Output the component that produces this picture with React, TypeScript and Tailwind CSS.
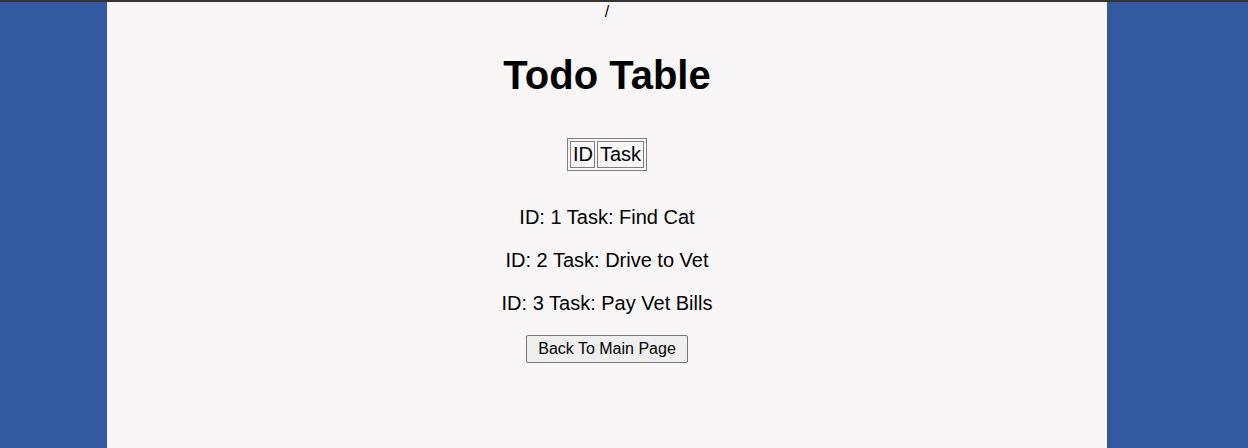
export default function App() {
  const todos = [
    { id: 1, task: "Find Cat" },
    { id: 2, task: "Drive to Vet" },
    { id: 3, task: "Pay Vet Bills" },
  ];
  return (
    <div className="flex flex-col h-[448px] w-[1248px] overflow-hidden" style={{ fontFamily: '"Liberation Sans", Arial, sans-serif' }}>
      <div className="h-[2px] bg-[#333333] shrink-0" />
      <div className="flex flex-1 bg-[#335aa0]">
        <div className="w-[107px] shrink-0" />
        <div className="w-[1000px] shrink-0 bg-[#f8f6f6] flex flex-col items-center text-black">
          <div className="text-[16px] leading-[18px] mt-[1px]">/</div>
          <h1 className="text-[40px] leading-[46px] font-bold mt-[31px]">Todo Table</h1>
          <table className="mt-[40px] border border-[#808080] border-separate border-spacing-[2px] text-[20px] leading-[23px]">
            <thead>
              <tr>
                <th className="border border-[#808080] py-[1px] px-[1.5px] font-normal">ID</th>
                <th className="border border-[#808080] py-[1px] px-[1.5px] font-normal">Task</th>
              </tr>
            </thead>
          </table>
          <div className="mt-[35px] flex flex-col items-center gap-[20px] text-[20px] leading-[23px]">
            {todos.map((t) => (
              <p key={t.id}>ID: {t.id} Task: {t.task}</p>
            ))}
          </div>
          <button className="mt-[20px] text-[16px] leading-[18px] px-[11px] py-[4px] bg-[#efefef] border border-[#767676] rounded-[2px]">
            Back To Main Page
          </button>
        </div>
      </div>
    </div>
  );
}
